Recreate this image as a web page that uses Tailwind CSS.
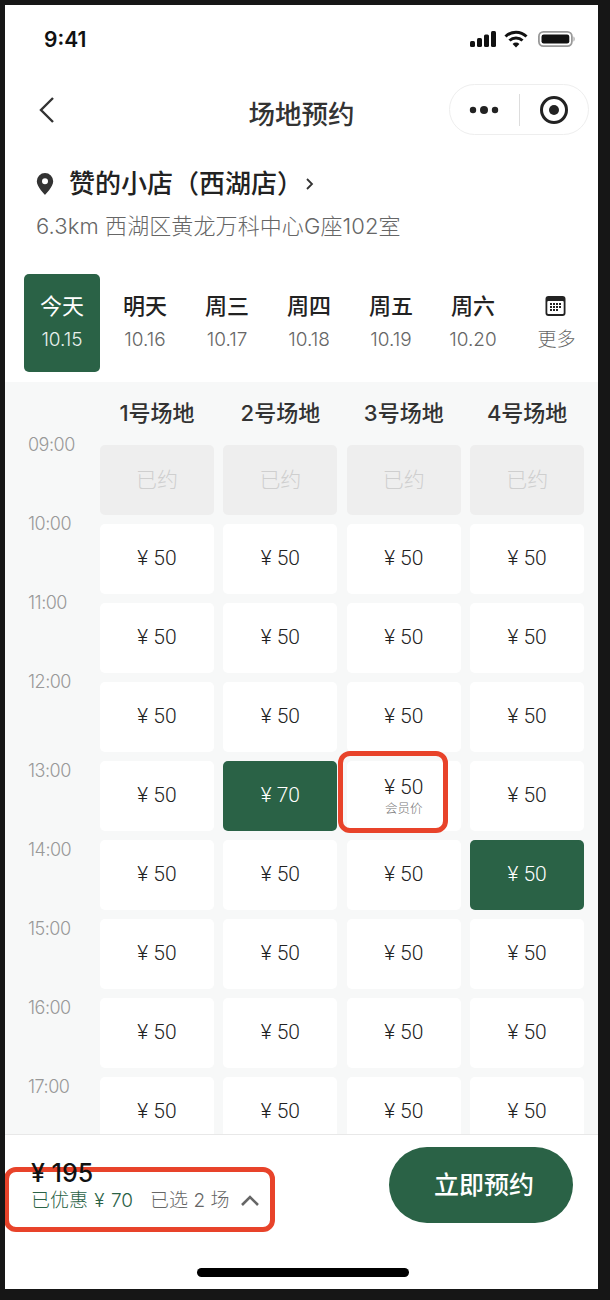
<!DOCTYPE html>
<html lang="zh">
<head>
<meta charset="utf-8">
<script src="https://cdn.jsdelivr.net/npm/@tailwindcss/browser@4"></script>
</head>
<body class="bg-[#161616] font-['Inter','Noto_Sans_CJK_SC',sans-serif]">
<div class="relative w-[610px] h-[1300px] pl-[5px] pt-[5px] overflow-hidden">
  <div class="relative flex flex-col w-[593px] h-[1284px] bg-white overflow-hidden">
    <!-- status bar -->
    <div class="flex items-center justify-between h-[68px] pl-[39px] pr-[23px] text-[#111]">
      <span class="text-[21px] font-semibold leading-none">9:41</span>
      <div class="flex items-center gap-[8px]">
        <svg width="26" height="16" viewBox="0 0 26 16" fill="#111"><rect x="0" y="10" width="5" height="6" rx="1.5"/><rect x="7" y="7" width="5" height="9" rx="1.5"/><rect x="14" y="3.5" width="5" height="12.5" rx="1.5"/><rect x="21" y="0" width="5" height="16" rx="1.5"/></svg>
        <svg width="24" height="18" viewBox="0 0 24 18" fill="none" stroke="#111" stroke-width="3"><path d="M1.5 6.5a15 15 0 0 1 21 0"/><path d="M5.5 10.5a9.5 9.5 0 0 1 13 0"/><path d="M12 17.5l-3.4-3.6a4.8 4.8 0 0 1 6.8 0z" fill="#111" stroke="none"/></svg>
        <svg class="ml-[2px]" width="37" height="16" viewBox="0 0 37 16" fill="none"><rect x="0.9" y="0.9" width="33" height="14.2" rx="4.5" stroke="#999" stroke-width="1.8"/><rect x="3.5" y="3.5" width="27.8" height="9" rx="2.2" fill="#111"/><path d="M35.5 5.5c1.5.5 1.5 4.5 0 5z" fill="#999"/></svg>
      </div>
    </div>
    <!-- nav -->
    <div class="relative flex items-center justify-center h-[82px] shrink-0">
      <svg class="absolute left-[33px] top-[23px]" width="18" height="28" viewBox="0 0 18 28" fill="none" stroke="#333" stroke-width="2.4"><path d="M15 2 3 14l12 12"/></svg>
      <span class="text-[26.5px] leading-none font-medium text-[#333]">场地预约</span>
      <div class="absolute left-[444px] top-[11px] flex items-center w-[140px] h-[51px] rounded-full border border-[#eeeeee] bg-white">
        <svg class="ml-[19px]" width="30" height="10" viewBox="0 0 30 10" fill="#222"><circle cx="4" cy="5" r="3.2"/><circle cx="15" cy="5" r="4"/><circle cx="26" cy="5" r="3.2"/></svg>
        <div class="ml-[20px] w-px h-[32px] bg-[#dddddd]"></div>
        <svg class="ml-[19px]" width="30" height="30" viewBox="0 0 30 30" fill="none"><circle cx="15" cy="15" r="12.5" stroke="#222" stroke-width="3"/><circle cx="15" cy="15" r="5" fill="#222"/></svg>
      </div>
    </div>
    <!-- store -->
    <div class="flex items-center h-[36px] mt-[11px] pl-[31px]">
      <svg width="18" height="24" viewBox="0 0 18 24"><path fill-rule="evenodd" fill="#333" d="M9 1a8.2 8.2 0 0 0-8.2 8.3C.8 15 9 23 9 23s8.2-8 8.2-13.7A8.2 8.2 0 0 0 9 1zm0 5.3a3 3 0 1 1 0 6 3 3 0 0 1 0-6z"/></svg>
      <span class="ml-[15px] text-[26px] leading-none font-medium text-[#222]">赞的小店（西湖店）</span>
      <svg class="ml-[2px]" width="10" height="14" viewBox="0 0 10 14" fill="none" stroke="#333" stroke-width="1.8"><path d="M2 2l5 5-5 5"/></svg>
    </div>
    <div class="mt-[6px] pl-[31px] text-[22px] tracking-[0.1px] leading-[36px] font-light text-[#666]">6.3km 西湖区黄龙万科中心G座102室</div>
    <!-- date tabs -->
    <div class="flex items-start mt-[30px] h-[108px] pl-[19px] shrink-0">
      <div class="flex flex-col items-center w-[76px] h-[98px] rounded-[5px] bg-[#2a6246] text-white">
        <span class="mt-[17px] text-[22px] leading-[30px]">今天</span>
        <span class="mt-[7px] text-[19px] leading-[24px] font-light text-[#e8f0ec]">10.15</span>
      </div>
      <div class="flex flex-col items-center w-[70px] ml-[10px]"><span class="mt-[17px] text-[22px] leading-[30px] font-medium text-[#222]">明天</span><span class="mt-[7px] text-[19px] leading-[24px] font-light text-[#666]">10.16</span></div>
      <div class="flex flex-col items-center w-[70px] ml-[12px]"><span class="mt-[17px] text-[22px] leading-[30px] font-medium text-[#222]">周三</span><span class="mt-[7px] text-[19px] leading-[24px] font-light text-[#666]">10.17</span></div>
      <div class="flex flex-col items-center w-[70px] ml-[12px]"><span class="mt-[17px] text-[22px] leading-[30px] font-medium text-[#222]">周四</span><span class="mt-[7px] text-[19px] leading-[24px] font-light text-[#666]">10.18</span></div>
      <div class="flex flex-col items-center w-[70px] ml-[12px]"><span class="mt-[17px] text-[22px] leading-[30px] font-medium text-[#222]">周五</span><span class="mt-[7px] text-[19px] leading-[24px] font-light text-[#666]">10.19</span></div>
      <div class="flex flex-col items-center w-[70px] ml-[12px]"><span class="mt-[17px] text-[22px] leading-[30px] font-medium text-[#222]">周六</span><span class="mt-[7px] text-[19px] leading-[24px] font-light text-[#666]">10.20</span></div>
      <div class="flex flex-col items-center w-[70px] ml-[12px]">
        <svg class="mt-[21px]" width="21" height="22" viewBox="0 0 21 22"><rect x="0.5" y="1" width="20" height="20" rx="3" fill="#222"/><rect x="2.3" y="6" width="16.4" height="13" rx="1" fill="#fff"/><g fill="#222"><rect x="5" y="8" width="2" height="2"/><rect x="8" y="8" width="2" height="2"/><rect x="11" y="8" width="2" height="2"/><rect x="14" y="8" width="2" height="2"/><rect x="5" y="11" width="2" height="2"/><rect x="8" y="11" width="2" height="2"/><rect x="11" y="11" width="2" height="2"/><rect x="14" y="11" width="2" height="2"/><rect x="5" y="14" width="2" height="2"/><rect x="8" y="14" width="2" height="2"/><rect x="11" y="14" width="2" height="2"/></g></svg>
        <span class="mt-[11px] pl-[3px] text-[19px] leading-[24px] font-light text-[#666]">更多</span>
      </div>
    </div>
    <!-- schedule -->
    <div class="flex-1 min-h-0 overflow-hidden bg-[#f7f8f8] pl-[21px] border-b border-[#e8e8e8]">
      <div class="grid grid-cols-[64.6px_114px_114px_114px_114px] gap-x-[9.4px] h-[62px] mb-[1px] items-center text-center text-[22px] leading-none font-medium text-[#333]">
        <div></div><div>1号场地</div><div>2号场地</div><div>3号场地</div><div>4号场地</div>
      </div>
      <div class="grid grid-cols-[64.6px_114px_114px_114px_114px] gap-x-[9.4px] auto-rows-[70px] gap-y-[9px] text-center text-[21px] font-light text-[#222] font-['Roboto','Noto_Sans_CJK_SC',sans-serif]">
        <div class="-mt-[13px] text-left font-['Inter'] font-light tracking-[-0.5px] text-[18px] leading-[26px] text-[#999] pl-[2px]">09:00</div>
        <div class="flex items-center justify-center pt-[2px] rounded-[5px] bg-[#eeeeee] text-[#cfcfcf]">已约</div>
        <div class="flex items-center justify-center pt-[2px] rounded-[5px] bg-[#eeeeee] text-[#cfcfcf]">已约</div>
        <div class="flex items-center justify-center pt-[2px] rounded-[5px] bg-[#eeeeee] text-[#cfcfcf]">已约</div>
        <div class="flex items-center justify-center pt-[2px] rounded-[5px] bg-[#eeeeee] text-[#cfcfcf]">已约</div>

        <div class="-mt-[13px] text-left font-['Inter'] font-light tracking-[-0.5px] text-[18px] leading-[26px] text-[#999] pl-[2px]">10:00</div>
        <div class="flex items-center justify-center rounded-[5px] bg-white">¥ 50</div>
        <div class="flex items-center justify-center rounded-[5px] bg-white">¥ 50</div>
        <div class="flex items-center justify-center rounded-[5px] bg-white">¥ 50</div>
        <div class="flex items-center justify-center rounded-[5px] bg-white">¥ 50</div>

        <div class="-mt-[13px] text-left font-['Inter'] font-light tracking-[-0.5px] text-[18px] leading-[26px] text-[#999] pl-[2px]">11:00</div>
        <div class="flex items-center justify-center rounded-[5px] bg-white">¥ 50</div>
        <div class="flex items-center justify-center rounded-[5px] bg-white">¥ 50</div>
        <div class="flex items-center justify-center rounded-[5px] bg-white">¥ 50</div>
        <div class="flex items-center justify-center rounded-[5px] bg-white">¥ 50</div>

        <div class="-mt-[13px] text-left font-['Inter'] font-light tracking-[-0.5px] text-[18px] leading-[26px] text-[#999] pl-[2px]">12:00</div>
        <div class="flex items-center justify-center rounded-[5px] bg-white">¥ 50</div>
        <div class="flex items-center justify-center rounded-[5px] bg-white">¥ 50</div>
        <div class="flex items-center justify-center rounded-[5px] bg-white">¥ 50</div>
        <div class="flex items-center justify-center rounded-[5px] bg-white">¥ 50</div>

        <div class="-mt-[3px] text-left font-['Inter'] font-light tracking-[-0.5px] text-[18px] leading-[26px] text-[#999] pl-[2px]">13:00</div>
        <div class="flex items-center justify-center rounded-[5px] bg-white">¥ 50</div>
        <div class="flex items-center justify-center rounded-[5px] bg-[#2a6246] text-white">¥ 70</div>
        <div class="flex flex-col items-center justify-center rounded-[5px] bg-white">
          <span class="leading-[24px]">¥ 50</span>
          <span class="mt-[2px] text-[12.5px] leading-[16px] text-[#777]">会员价</span>
        </div>
        <div class="flex items-center justify-center rounded-[5px] bg-white">¥ 50</div>

        <div class="-mt-[3px] text-left font-['Inter'] font-light tracking-[-0.5px] text-[18px] leading-[26px] text-[#999] pl-[2px]">14:00</div>
        <div class="flex items-center justify-center rounded-[5px] bg-white">¥ 50</div>
        <div class="flex items-center justify-center rounded-[5px] bg-white">¥ 50</div>
        <div class="flex items-center justify-center rounded-[5px] bg-white">¥ 50</div>
        <div class="flex items-center justify-center rounded-[5px] bg-[#2a6246] text-white">¥ 50</div>

        <div class="-mt-[3px] text-left font-['Inter'] font-light tracking-[-0.5px] text-[18px] leading-[26px] text-[#999] pl-[2px]">15:00</div>
        <div class="flex items-center justify-center rounded-[5px] bg-white">¥ 50</div>
        <div class="flex items-center justify-center rounded-[5px] bg-white">¥ 50</div>
        <div class="flex items-center justify-center rounded-[5px] bg-white">¥ 50</div>
        <div class="flex items-center justify-center rounded-[5px] bg-white">¥ 50</div>

        <div class="-mt-[3px] text-left font-['Inter'] font-light tracking-[-0.5px] text-[18px] leading-[26px] text-[#999] pl-[2px]">16:00</div>
        <div class="flex items-center justify-center rounded-[5px] bg-white">¥ 50</div>
        <div class="flex items-center justify-center rounded-[5px] bg-white">¥ 50</div>
        <div class="flex items-center justify-center rounded-[5px] bg-white">¥ 50</div>
        <div class="flex items-center justify-center rounded-[5px] bg-white">¥ 50</div>

        <div class="-mt-[3px] text-left font-['Inter'] font-light tracking-[-0.5px] text-[18px] leading-[26px] text-[#999] pl-[2px]">17:00</div>
        <div class="flex items-center justify-center rounded-[5px] bg-white">¥ 50</div>
        <div class="flex items-center justify-center rounded-[5px] bg-white">¥ 50</div>
        <div class="flex items-center justify-center rounded-[5px] bg-white">¥ 50</div>
        <div class="flex items-center justify-center rounded-[5px] bg-white">¥ 50</div>
      </div>
    </div>
    <!-- footer -->
    <div class="relative h-[154px] shrink-0 bg-white">
      <div class="absolute left-[384px] top-[12px] flex items-center justify-center w-[184px] h-[76px] rounded-full bg-[#2a6246] pl-[6px] pt-[2px] text-white text-[25px] font-medium">立即预约</div>
      <div class="absolute left-[192px] top-[133px] w-[212px] h-[9px] rounded-full bg-black"></div>
    </div>
    <!-- annotated boxes -->
    <div class="absolute left-[333px] top-[746px] w-[110px] h-[82px] rounded-[12px] border-[5px] border-[#e8432a]"></div>
    <div class="absolute -left-[1px] top-[1162px] flex items-center w-[271px] h-[65px] rounded-[12px] border-[5px] border-[#e8432a] bg-white pl-[22px] pt-[2px] text-[19px] leading-none">
      <span class="text-[#2a6246] whitespace-pre font-light [word-spacing:1px]">已优惠 ¥ 70</span>
      <span class="ml-[17px] text-[#666] whitespace-pre font-light">已选 2 场</span>
      <svg class="ml-[11px]" width="20" height="13" viewBox="0 0 20 13" fill="none" stroke="#666" stroke-width="2.6"><path d="M2 11l8-8 8 8"/></svg>
    </div>
    <span class="absolute left-[26px] top-[1153px] text-[25px] leading-[30px] font-medium text-[#111]">¥ 195</span>
  </div>
</div>
</body>
</html>
